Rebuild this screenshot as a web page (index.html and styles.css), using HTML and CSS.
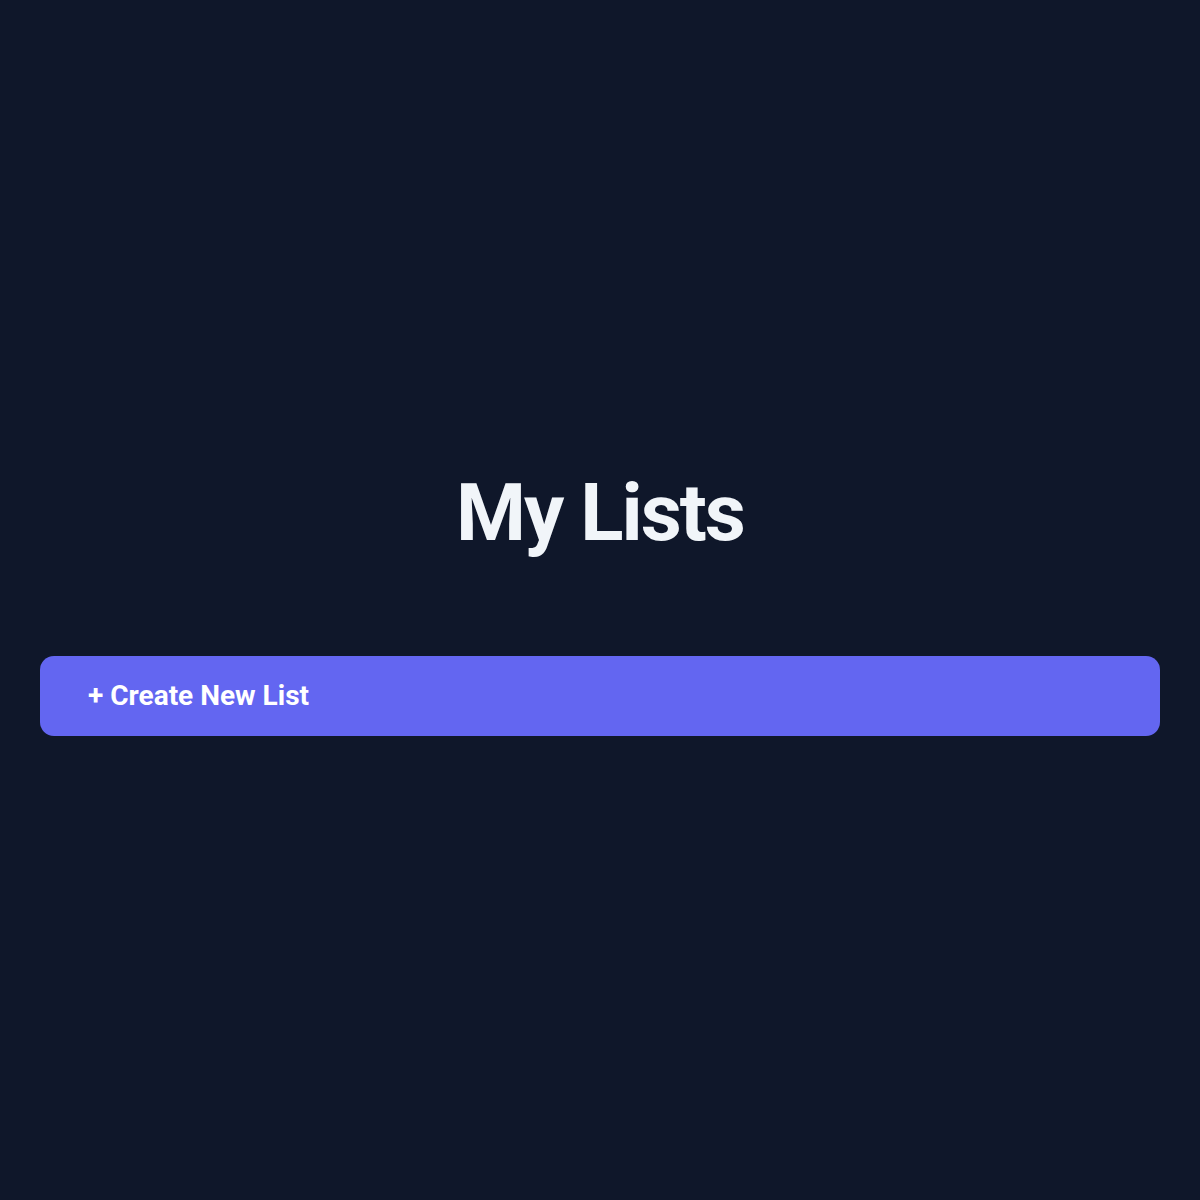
FILE: index.html
```html
<!DOCTYPE html>
<html lang="en">
<head>
<meta charset="utf-8">
<title>My Lists</title>
<link rel="stylesheet" href="styles.css">
</head>
<body>
<main class="page">
  <h1 class="title">My Lists</h1>
  <button class="create-btn" type="button">+ Create New List</button>
</main>
</body>
</html>
```
FILE: styles.css
```css
* { box-sizing: border-box; }
html, body { margin: 0; padding: 0; }
body {
  background: #0f172a;
  font-family: Roboto, "Liberation Sans", sans-serif;
  color: #f1f5f9;
}
.page {
  min-height: 100vh;
  display: flex;
  flex-direction: column;
  justify-content: center;
  padding: 1px 40px 0;
  gap: 96px;
}
.title {
  margin: 0;
  text-align: center;
  font-size: 80px;
  font-weight: 700;
  letter-spacing: -2px;
  color: #f1f5f9;
}
.create-btn {
  display: block;
  width: 100%;
  height: 80px;
  border: none;
  border-radius: 14px;
  background: #6366f1;
  color: #ffffff;
  font-family: Roboto, "Liberation Sans", sans-serif;
  font-size: 28px;
  font-weight: 700;
  text-align: left;
  padding: 0 48px;
  cursor: pointer;
}
```
